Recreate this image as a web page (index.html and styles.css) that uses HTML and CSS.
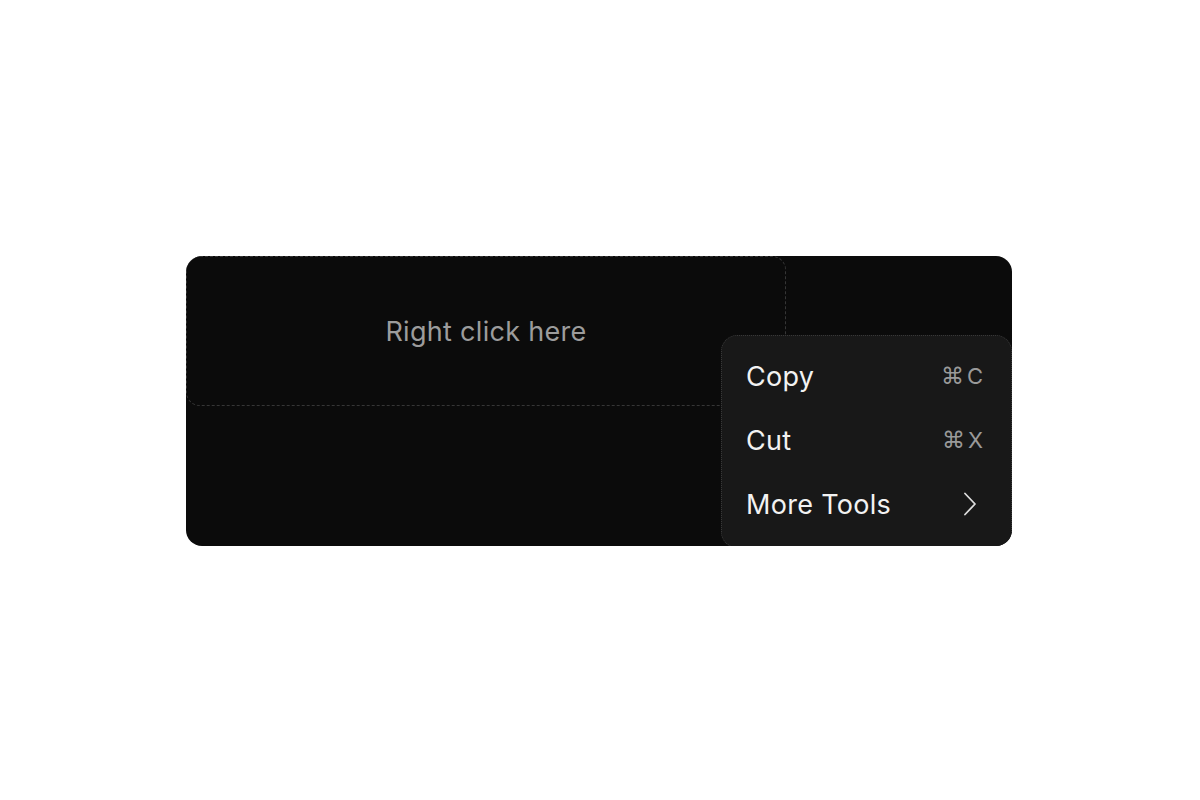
FILE: index.html
```html
<!DOCTYPE html>
<html lang="en">
<head>
<meta charset="utf-8">
<title>Context Menu</title>
<link rel="stylesheet" href="styles.css">
</head>
<body>
  <div class="stage">
    <div class="trigger">Right click here</div>
    <div class="menu">
      <div class="item"><span class="label">Copy</span><span class="shortcut"><span class="cmd">⌘</span>C</span></div>
      <div class="item"><span class="label">Cut</span><span class="shortcut"><span class="cmd">⌘</span>X</span></div>
      <div class="item"><span class="label">More Tools</span>
        <svg class="chev" width="14" height="24" viewBox="0 0 14 24" fill="none"><path d="M2 1.5 L12 12 L2 22.5" stroke="#dcdcdc" stroke-width="1.8" stroke-linecap="round" stroke-linejoin="round"/></svg>
      </div>
    </div>
  </div>
</body>
</html>
```

FILE: styles.css
```css
html, body {
  margin: 0;
  padding: 0;
  background: #ffffff;
}
body {
  min-height: 100vh;
  box-sizing: border-box;
  padding: 2px 2px 0 0;
  display: flex;
  align-items: center;
  justify-content: center;
  font-family: Inter, "Noto Sans", "DejaVu Sans", sans-serif;
}
.stage {
  position: relative;
  width: 826px;
  height: 290px;
  background: #0b0b0b;
  border-radius: 16px;
  overflow: hidden;
}
.trigger {
  box-sizing: border-box;
  width: 600px;
  height: 150px;
  border: 1px dashed #363636;
  border-radius: 14px;
  display: flex;
  align-items: center;
  justify-content: center;
  color: #9c9c9c;
  font-size: 27px;
  letter-spacing: 0.3px;
}
.menu {
  position: absolute;
  left: 535px;
  top: 79px;
  width: 291px;
  box-sizing: border-box;
  padding: 8px 0 11px;
  background: #181818;
  border: 1px dotted #383838;
  border-radius: 16px;
}
.item {
  height: 64px;
  display: flex;
  align-items: center;
  justify-content: space-between;
  padding: 0 28px 0 24px;
  color: #f2f2f2;
  font-size: 27px;
  letter-spacing: 0.3px;
}
.shortcut {
  color: #9a9a9a;
  font-size: 22px;
  letter-spacing: 0;
  display: flex;
  align-items: center;
  gap: 3px;
}
.cmd {
  font-family: "DejaVu Sans", sans-serif;
  font-size: 23px;
}
.chev {
  margin-right: 6px;
}
```
